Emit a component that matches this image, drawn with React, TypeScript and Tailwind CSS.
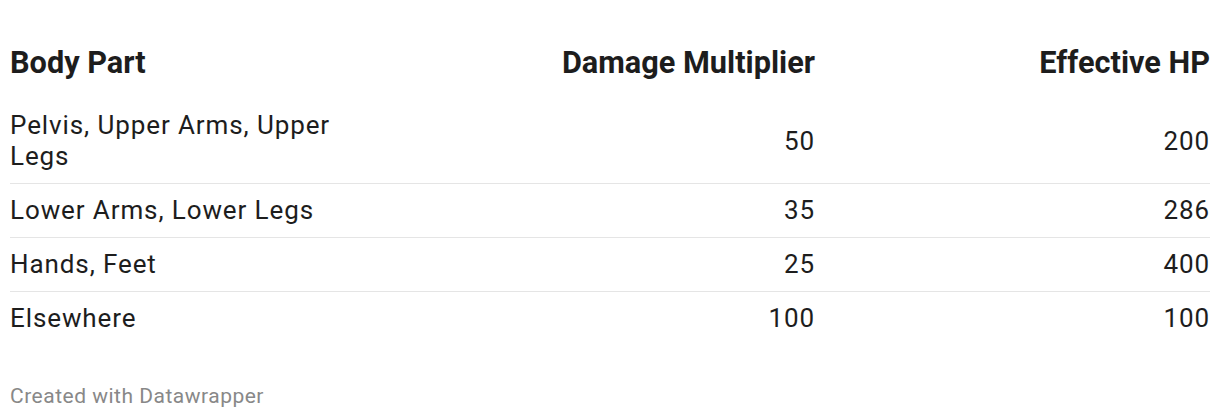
const rows = [
  { part: "Pelvis, Upper Arms, Upper Legs", mult: "50", hp: "200" },
  { part: "Lower Arms, Lower Legs", mult: "35", hp: "286" },
  { part: "Hands, Feet", mult: "25", hp: "400" },
  { part: "Elsewhere", mult: "100", hp: "100" },
];

export default function App() {
  return (
    <div className="w-[1220px] h-[420px] bg-white px-[10px] pt-[34px] text-[#1d1d1d] font-['Roboto',sans-serif]">
      <table className="w-[1200px] border-collapse text-[26px] leading-[31px] tracking-[0.9px]">
        <thead>
          <tr className="font-bold text-[30.7px] leading-[36px] tracking-normal">
            <th className="w-[345px] text-left align-bottom pt-[11px] pb-[18px]">Body Part</th>
            <th className="text-right align-bottom pt-[11px] pb-[18px]">Damage Multiplier</th>
            <th className="w-[395px] text-right align-bottom pt-[11px] pb-[18px]">Effective HP</th>
          </tr>
        </thead>
        <tbody>
          {rows.map((r, i) => (
            <tr key={r.part} className={i < rows.length - 1 ? "border-b border-[#e5e5e5]" : ""}>
              <td className="text-left py-[11px] pr-2">{r.part}</td>
              <td className="text-right py-[11px] tabular-nums">{r.mult}</td>
              <td className="text-right py-[11px] tabular-nums">{r.hp}</td>
            </tr>
          ))}
        </tbody>
      </table>
      <div className="mt-[39px] text-[21px] leading-[24px] tracking-[0.5px] text-[#888888]">Created with Datawrapper</div>
    </div>
  );
}
